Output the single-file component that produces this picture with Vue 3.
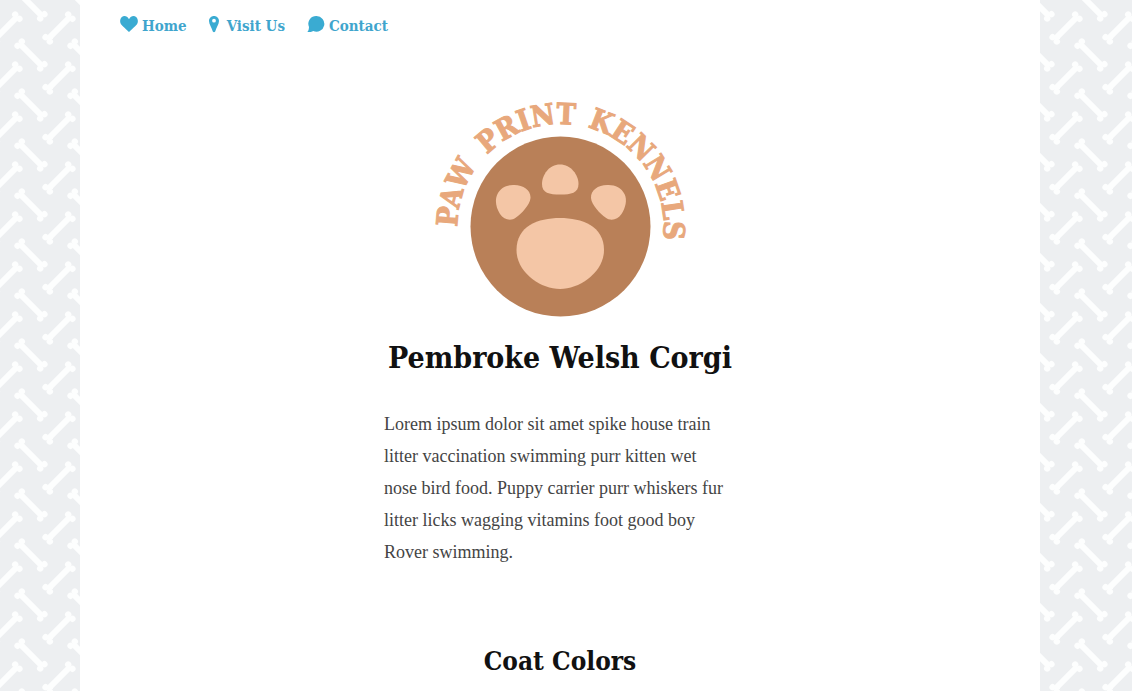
<script setup>
const links = [
  { id: 'home', label: 'Home', href: '#home' },
  { id: 'visit', label: 'Visit Us', href: '#visit' },
  { id: 'contact', label: 'Contact', href: '#contact' },
]
</script>

<template>
  <div class="page">
    <svg class="backdrop" aria-hidden="true">
      <defs>
        <g id="bone" fill="#fdfefe">
          <path d="M-16 0H16" stroke="#fdfefe" stroke-width="6" />
          <circle cx="-16" cy="-3" r="3.200" />
          <circle cx="-16" cy="3" r="3.200" />
          <circle cx="16" cy="-3" r="3.200" />
          <circle cx="16" cy="3" r="3.200" />
        </g>
        <pattern id="bones" width="53" height="50" patternUnits="userSpaceOnUse">
          <rect width="53" height="50" fill="#edeff1" />
          <use href="#bone" transform="translate(6 28) rotate(-45)" />
          <use href="#bone" transform="translate(59 28) rotate(-45)" />
          <use href="#bone" transform="translate(31 55) rotate(45)" />
          <use href="#bone" transform="translate(31 5) rotate(45)" />
        </pattern>
      </defs>
      <rect width="100%" height="100%" fill="url(#bones)" />
    </svg>

    <div class="sheet">
      <nav class="nav" aria-label="Main">
        <a v-for="link in links" :key="link.id" :href="link.href" :class="link.id">
          <svg v-if="link.id === 'home'" width="18" height="18" viewBox="0 0 18 18" aria-hidden="true">
            <path d="M9 17C7 15 2.500 11.300 1 9.300C-.5 7 .1 3.600 1.600 2.200C4 .1 7.200.8 9 4.200C10.800.8 14 .1 16.400 2.200C17.900 3.600 18.500 7 17 9.300C15.500 11.300 11 15 9 17Z" />
          </svg>
          <svg v-else-if="link.id === 'visit'" width="10" height="18" viewBox="0 0 10 18" aria-hidden="true">
            <path fill-rule="evenodd" d="M5 1C2.200 1 0 3.200 0 6C0 9.500 2.800 12.600 3.800 16.500Q5 18 6.200 16.500C7.200 12.600 10 9.500 10 6C10 3.200 7.800 1 5 1ZM5 3.800A1.900 1.900 0 1 1 5 7.600A1.900 1.900 0 1 1 5 3.800Z" />
          </svg>
          <svg v-else width="18" height="18" viewBox="0 0 18 18" aria-hidden="true">
            <path d="M9.500 1A7.800 7.800 0 1 1 6.300 15.900C4.500 16.900 2.500 17.200.3 17.100C1.700 15.500 1.800 14 2 12A7.800 7.800 0 0 1 9.500 1Z" />
          </svg>
          <span>{{ link.label }}</span>
        </a>
      </nav>

      <main>
        <svg class="logo" width="260" height="224" viewBox="430 96 260 224" role="img" aria-label="Paw Print Kennels">
          <defs>
            <path id="arc" d="M459 245A103 103 0 0 1 560.500 124A103 103 0 0 1 660 255" />
          </defs>
          <circle cx="560.500" cy="226.500" r="90" fill="#b98058" />
          <g fill="#f4c6a6">
            <path d="M560 164.500C571 164.500 578.500 175 578.500 184C578.500 193 571 194.500 560.500 194.500C549 194.500 542 193 542 184C542 175 549 164.500 560 164.500Z" />
            <path d="M513 185C523 184.500 531 190 530.500 198C530 205 521 214 516 217.500C511 221.500 504 220 500 214C496 208 494.500 200 497.500 194C500.500 188 506 185 513 185Z" />
            <path d="M608.500 185C598.500 184.500 590.500 190 591 198C591.500 205 600.500 214 605.500 217.500C610.500 221.500 617.500 220 621.500 214C625.500 208 627.500 200 624.500 194C621.500 188 615.500 185 608.500 185Z" />
            <path d="M560 218C582 218 604 226 604 250C604 272 580 289 560 289C540 289 516.500 272 516.500 250C516.500 226 538 218 560 218Z" />
          </g>
          <text class="motto"><textPath href="#arc" startOffset="18">PAW</textPath></text>
          <text class="motto"><textPath href="#arc" startOffset="98">PRINT</textPath></text>
          <text class="motto"><textPath href="#arc" startOffset="207">KENNELS</textPath></text>
        </svg>
        <h1>Pembroke Welsh Corgi</h1>
        <p>
          Lorem ipsum dolor sit amet spike house train<br />
          litter vaccination swimming purr kitten wet<br />
          nose bird food. Puppy carrier purr whiskers fur<br />
          litter licks wagging vitamins foot good boy<br />
          Rover swimming.
        </p>
        <h2>Coat Colors</h2>
      </main>
    </div>
  </div>
</template>

<style>
body {
  margin: 0;
  background: #edeff1;
}
</style>

<style scoped>
.page {
  position: relative;
  min-height: 100vh;
  padding-right: 12px;
  font-family: "Roboto Slab", "DejaVu Serif Condensed", "DejaVu Serif", serif;
  color: #111;
}
.backdrop {
  position: absolute;
  inset: 0;
  width: 100%;
  height: 100%;
}
.sheet {
  position: relative;
  box-sizing: border-box;
  max-width: 960px;
  min-height: 100vh;
  margin: 0 auto;
  background: #fff;
}
.nav {
  display: flex;
  gap: 22px;
  padding: 14px 40px 0;
}
.nav a {
  display: flex;
  gap: 4px;
  color: #3fa5cd;
  font-size: 15px;
  font-weight: 700;
  line-height: 24px;
  text-decoration: none;
  white-space: nowrap;
}
.nav a.visit {
  gap: 8px;
}
.nav svg {
  margin-top: 1px;
  fill: #3aabd2;
}
main {
  display: flex;
  flex-direction: column;
  align-items: center;
}
.logo {
  margin-top: 58px;
}
.motto {
  font-size: 29px;
  font-weight: 700;
  fill: #e8a87c;
  stroke: #e8a87c;
  stroke-width: 1px;
}
h1,
h2 {
  margin: 0;
  font-weight: 700;
  white-space: nowrap;
}
h1 {
  margin-top: 16px;
  font-size: 30px;
  line-height: 44px;
}
p {
  width: 352px;
  margin: 28px 0 0;
  font-family: "Roboto Slab", "Liberation Serif", serif;
  font-size: 18px;
  font-weight: 300;
  line-height: 32px;
  color: #444;
  white-space: nowrap;
}
h2 {
  margin-top: 73px;
  font-size: 26px;
  line-height: 40px;
}
</style>
